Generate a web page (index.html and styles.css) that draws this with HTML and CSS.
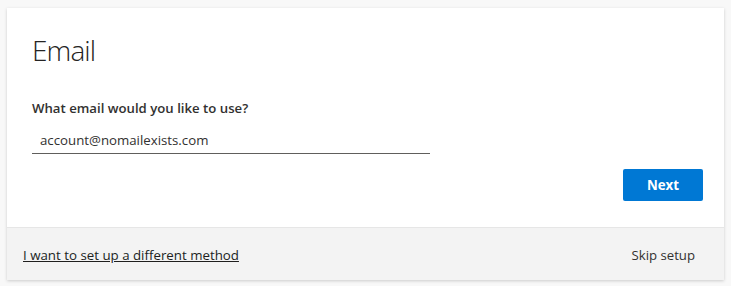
FILE: index.html
```html
<!DOCTYPE html>
<html lang="en">
<head>
<meta charset="utf-8">
<title>Email</title>
<link rel="stylesheet" href="styles.css">
</head>
<body>
<div class="card">
  <div class="card-body">
    <h1 class="title">Email</h1>
    <label class="label" for="email">What email would you like to use?</label>
    <div class="field">
      <input class="input" id="email" type="text" value="account@nomailexists.com">
    </div>
    <div class="actions">
      <button class="btn-primary" type="button">Next</button>
    </div>
  </div>
  <div class="card-footer">
    <a class="link" href="#">I want to set up a different method</a>
    <button class="btn-link" type="button">Skip setup</button>
  </div>
</div>
</body>
</html>
```
FILE: styles.css
```css
html, body {
  margin: 0;
  padding: 0;
}
body {
  background: #f8f8f8;
  padding: 8px 7px 6px 7px;
  font-family: "Open Sans", "Noto Sans", sans-serif;
  color: #323130;
}
.card {
  background: #ffffff;
  box-shadow: 0 1px 3px rgba(0, 0, 0, 0.18);
}
.card-body {
  padding: 22px 21px 26px 25px;
  display: flex;
  flex-direction: column;
}
.title {
  margin: 0;
  font-size: 28px;
  font-weight: 300;
  line-height: 40px;
  letter-spacing: -0.9px;
  color: #252423;
}
.label {
  margin-top: 28px;
  font-size: 13.2px;
  font-weight: 600;
  line-height: 20px;
  color: #323130;
}
.field {
  margin-top: 8px;
  width: 398px;
  border-bottom: 1px solid #605e5c;
}
.input {
  display: block;
  width: 100%;
  box-sizing: border-box;
  border: 0;
  outline: none;
  background: transparent;
  padding: 4px 8px 3px 8px;
  font-family: inherit;
  font-size: 13.25px;
  line-height: 20px;
  color: #323130;
}
.actions {
  margin-top: 15px;
  display: flex;
  justify-content: flex-end;
}
.btn-primary {
  width: 80px;
  height: 32px;
  border: 0;
  border-radius: 2px;
  background: #0078d4;
  color: #ffffff;
  font-family: inherit;
  font-size: 13.3px;
  font-weight: 700;
}
.card-footer {
  background: #f3f3f3;
  border-top: 1px solid #e6e6e6;
  height: 53px;
  box-sizing: border-box;
  display: flex;
  align-items: center;
  justify-content: space-between;
  padding: 2px 29px 0 16px;
}
.link {
  font-size: 13.3px;
  color: #201f1e;
  text-decoration: underline;
}
.btn-link {
  border: 0;
  background: transparent;
  padding: 0;
  font-family: inherit;
  font-size: 13.2px;
  color: #323130;
}
```
